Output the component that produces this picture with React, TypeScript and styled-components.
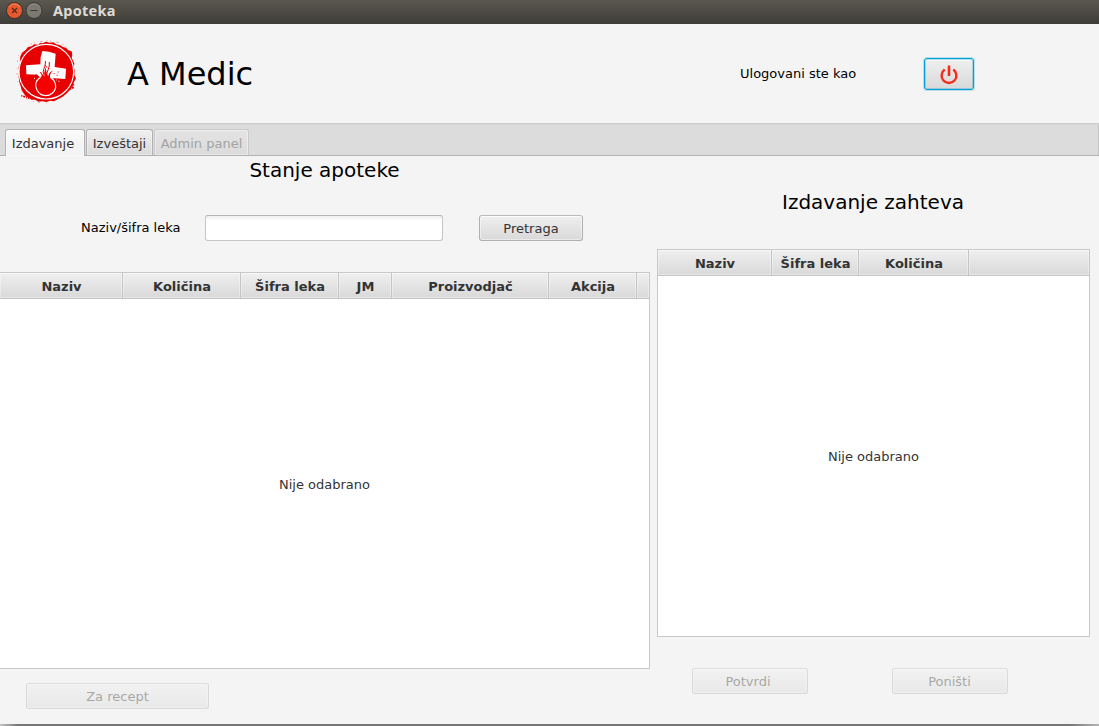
import React from "react";
import styled, { createGlobalStyle, css } from "styled-components";

const GlobalStyle = createGlobalStyle`
  * { box-sizing: border-box; }
  html, body { margin: 0; padding: 0; background: #f4f4f4; }
`;

const Window = styled.div`
  width: 1099px;
  height: 726px;
  display: flex;
  flex-direction: column;
  overflow: hidden;
  background: #f4f4f4;
  color: #000;
  font: 13px/16px "DejaVu Sans", sans-serif;
  white-space: nowrap;
`;

const TitleBar = styled.div`
  height: 24px;
  flex: none;
  display: flex;
  align-items: center;
  gap: 3px;
  padding: 0 0 3px 6px;
  background: linear-gradient(#5b584f, #3d3c37);
`;

const WindowButton = styled.svg`
  width: 17px;
  height: 17px;
  flex: none;
`;

const WindowTitle = styled.div`
  margin-left: 7px;
  padding-bottom: 2px;
  font: bold 14.5px/18px "Noto Sans", sans-serif;
  letter-spacing: 0.25px;
  color: #dfdbd2;
`;

const Header = styled.header`
  height: 99px;
  flex: none;
  display: flex;
  align-items: center;
`;

const Logo = styled.svg`
  width: 75px;
  height: 75px;
  margin: 0 0 2px 10px;
`;

const Brand = styled.div`
  margin: 0 0 0 42px;
  width: 613px;
  font-size: 32px;
  line-height: 38px;
`;

const LoginStatus = styled.div`
  width: 183px;
`;

const buttonFace = css`
  border: 1px solid #b0b0b0;
  border-top-color: #bababa;
  border-radius: 3px;
  background: linear-gradient(#efefef, #d9d9d9);
  box-shadow: inset 0 0 0 1px rgba(255, 255, 255, 0.45), inset 0 1px 0 rgba(255, 255, 255, 0.7);
`;

const Button = styled.button<{ $width: number; $nudge?: number }>`
  ${buttonFace}
  width: ${(p) => p.$width}px;
  height: 26px;
  flex: none;
  padding: 1px ${(p) => p.$nudge ?? 0}px 0 0;
  color: #333;
  font: 13px/16px "DejaVu Sans", sans-serif;
  &:disabled {
    opacity: 0.4;
  }
`;

const PowerButton = styled.button`
  ${buttonFace}
  width: 50px;
  height: 32px;
  margin-left: 1px;
  padding: 2px 0 0;
  border-color: #039ed3;
  display: flex;
  align-items: center;
  justify-content: center;
  box-shadow: 0 0 0 1px rgba(3, 158, 211, 0.25), inset 0 0 0 1px rgba(3, 158, 211, 0.3),
    inset 0 2px 0 rgba(255, 255, 255, 0.6);
`;

const TabStrip = styled.nav`
  height: 33px;
  flex: none;
  display: flex;
  align-items: flex-end;
  gap: 1px;
  padding-left: 5px;
  background: #dcdcdc;
  border-bottom: 1px solid #b1b1b1;
  box-shadow: inset 0 1px 0 #cecece, inset 0 2px 0 #d6d6d6, inset -1px 0 0 #c4c4c4;
`;

const Tab = styled.div<{ $width: number; $state?: "active" | "disabled" }>`
  width: ${(p) => p.$width}px;
  height: 26px;
  padding-top: 6px;
  text-align: center;
  color: #333;
  border: 1px solid #b1b1b1;
  border-bottom: 0;
  border-radius: 3px 3px 0 0;
  background: linear-gradient(#efefef, #dadada);
  box-shadow: inset 0 0 0 1px rgba(255, 255, 255, 0.4);
  ${(p) =>
    p.$state === "active" &&
    css`
      height: 27px;
      margin-bottom: -1px;
      padding-right: 4px;
      background: linear-gradient(#fbfbfb, #f4f4f4 60%);
    `}
  ${(p) =>
    p.$state === "disabled" &&
    css`
      color: #a3a3a3;
      border-color: #cacaca;
      background: linear-gradient(#e3e3e3, #dbdbdb);
    `}
`;

const Content = styled.main`
  height: 568px;
  flex: none;
  display: flex;
  gap: 7px;
`;

const Panel = styled.section<{ $width: number; $top: number }>`
  width: ${(p) => p.$width}px;
  flex: none;
  padding-top: ${(p) => p.$top}px;
`;

const PanelTitle = styled.h2`
  margin: 0;
  padding-right: 1px;
  text-align: center;
  font-size: 20px;
  font-weight: normal;
  line-height: 24px;
`;

const SearchRow = styled.div`
  display: flex;
  align-items: center;
  margin-top: 33px;
  padding-left: 81px;
`;

const SearchLabel = styled.label`
  width: 124px;
`;

const SearchInput = styled.input`
  width: 238px;
  height: 26px;
  margin: 0 36px 0 0;
  padding: 0 8px;
  border: 1px solid #c6c6c6;
  border-top-color: #b5b5b5;
  border-radius: 3px;
  background: linear-gradient(#f0f0f0, #fff 5px);
  outline: none;
`;

const Table = styled.div<{ $height: number; $top: number; $flush?: boolean }>`
  height: ${(p) => p.$height}px;
  margin-top: ${(p) => p.$top}px;
  display: flex;
  flex-direction: column;
  border: 1px solid #c8c8c8;
  ${(p) => p.$flush && "border-left: 0;"}
  background: #fff;
`;

const TableHead = styled.div<{ $columns: string }>`
  height: 26px;
  flex: none;
  display: grid;
  grid-template-columns: ${(p) => p.$columns};
  border-bottom: 1px solid #c4c4c4;
`;

const HeadCell = styled.div`
  padding: 6px 0 0 1px;
  text-align: center;
  font-weight: bold;
  color: #333;
  border-right: 1px solid #c4c4c4;
  background: linear-gradient(#efefef, #d9d9d9);
  box-shadow: inset 0 0 0 1px rgba(255, 255, 255, 0.35), inset 0 1px 0 rgba(255, 255, 255, 0.4);
  &:last-child {
    border-right: 0;
  }
`;

const Placeholder = styled.div`
  flex: 1;
  display: flex;
  align-items: center;
  justify-content: center;
  padding-top: 2px;
  color: #333;
`;

const Actions = styled.div<{ $top: number; $left: number }>`
  display: flex;
  gap: 84px;
  padding: ${(p) => p.$top}px 0 0 ${(p) => p.$left}px;
`;

const BottomEdge = styled.div`
  height: 2px;
  background: linear-gradient(90deg, #c4c4c4, #777 18px, #777 1070px, #b4b4b4);
`;

function MedicLogo() {
  return (
    <Logo viewBox="0 0 225 225">
      <path
        fill="#e60000"
        d="M90 24 98 25 108 20 118 23 130 22 139 28 151 31 159 36 168 38 174 45 185 49 187 59 185 69 190 78 193 86 191 96 194 107 193 120 198 130 192 141 189 151 184 160 177 168 168 177 157 186 145 192 132 199 120 197 110 201 96 199 85 200 75 194 64 194 58 188 49 185 43 178 35 166 32 154 28 142 26 127 27 112 26 95 31 80 30 67 36 53 47 45 54 36 65 34 73 28 85 29Z"
      />
      <g stroke="#e60000" strokeWidth="2.5" fill="none">
        <path strokeDasharray="3 8 2 17 6 13" d="M62 28Q84 19 115 18T171 37" opacity=".6" />
        <path strokeDasharray="2 14 4 19" d="M26 60Q15 112 27 151M35 183Q66 205 111 204" opacity=".5" />
      </g>
      <circle cx="109" cy="110" r="82" fill="none" stroke="#fff" strokeWidth="3.5" />
      <g stroke="#e60000" strokeWidth="5" strokeDasharray="3 3 6 3">
        <path d="M34 182 59 190M181 163 192 156M185 154 192 148" />
      </g>
      <path
        fill="#fff"
        d="M97 48 117 50 137 56 134 96 168 101 166 132 133 130 122 132 91 128 82 119 49 118 48 91 91 88 92 66Z"
      />
      <path
        fill="#f80000"
        stroke="#fff"
        strokeWidth="3.5"
        d="M90 128C75 137 76 153 80 163C86 177 97 182 107 182C122 182 135 171 137 157C138 143 131 133 122 128C120 120 123 115 127 107C119 111 115 114 114 119C108 110 113 100 105 88C107 102 99 108 101 119L93 112C93 118 96 123 90 128Z"
      />
      <path
        fill="none"
        stroke="#e60000"
        strokeWidth="3"
        d="M101 119C96 104 108 96 106 78M110 119C111 108 120 99 118 81M118 121Q119 111 127 109M97 121 91 111M111 98 106 91"
      />
      <path stroke="#e60000" strokeWidth="3" d="M131 116h3M143 111h3M140 121h3M77 118h3" />
      <path stroke="#fff" strokeWidth="3" d="M72 130h3M80 137h3M145 139h3M139 135h2" />
    </Logo>
  );
}

const leftColumns = ["Naziv", "Količina", "Šifra leka", "JM", "Proizvodjač", "Akcija", ""];
const rightColumns = ["Naziv", "Šifra leka", "Količina", ""];

export default function App() {
  return (
    <>
      <GlobalStyle />
      <Window>
        <TitleBar>
          <WindowButton viewBox="0 0 17 17">
            <circle cx="8.5" cy="8.5" r="8" fill="#e9592f" stroke="#37322c" />
            <path d="M3 5A6.6 6.6 0 0 1 14 5" fill="none" stroke="#f08a62" />
            <path d="M6 6l5 5M11 6l-5 5" stroke="#502b1d" strokeWidth="1.2" />
          </WindowButton>
          <WindowButton viewBox="0 0 17 17">
            <circle cx="8" cy="8.5" r="8" fill="#7b7970" stroke="#37352f" />
            <path d="M2.5 5A6.6 6.6 0 0 1 13.5 5" fill="none" stroke="#919086" />
            <path d="M4.5 8.5h7" stroke="#3b3933" />
          </WindowButton>
          <WindowTitle>Apoteka</WindowTitle>
        </TitleBar>
        <Header>
          <MedicLogo />
          <Brand>A Medic</Brand>
          <LoginStatus>Ulogovani ste kao</LoginStatus>
          <PowerButton aria-label="Odjava">
            <svg width="20" height="20" viewBox="0 0 20 20" fill="none" stroke="#f52a18" strokeWidth="2.4">
              <path d="M5.7 4.6A7.4 7.4 0 1 0 14.3 4.6" />
              <path d="M10 0.5V11" strokeWidth="2.6" />
            </svg>
          </PowerButton>
        </Header>
        <TabStrip>
          <Tab $width={80} $state="active">Izdavanje</Tab>
          <Tab $width={67}>Izveštaji</Tab>
          <Tab $width={95} $state="disabled">Admin panel</Tab>
        </TabStrip>
        <Content>
          <Panel $width={650} $top={2}>
            <PanelTitle>Stanje apoteke</PanelTitle>
            <SearchRow>
              <SearchLabel htmlFor="search">Naziv/šifra leka</SearchLabel>
              <SearchInput id="search" />
              <Button $width={104}>Pretraga</Button>
            </SearchRow>
            <Table $height={397} $top={31} $flush>
              <TableHead $columns="123px 118px 98px 53px 157px 88px 1fr">
                {leftColumns.map((name) => <HeadCell key={name}>{name}</HeadCell>)}
              </TableHead>
              <Placeholder>Nije odabrano</Placeholder>
            </Table>
            <Actions $top={14} $left={26}>
              <Button $width={183} disabled>Za recept</Button>
            </Actions>
          </Panel>
          <Panel $width={433} $top={34}>
            <PanelTitle>Izdavanje zahteva</PanelTitle>
            <Table $height={388} $top={35}>
              <TableHead $columns="114px 87px 110px 1fr">
                {rightColumns.map((name) => <HeadCell key={name}>{name}</HeadCell>)}
              </TableHead>
              <Placeholder>Nije odabrano</Placeholder>
            </Table>
            <Actions $top={31} $left={35}>
              <Button $width={116} $nudge={4} disabled>Potvrdi</Button>
              <Button $width={116} $nudge={1} disabled>Poništi</Button>
            </Actions>
          </Panel>
        </Content>
        <BottomEdge />
      </Window>
    </>
  );
}
